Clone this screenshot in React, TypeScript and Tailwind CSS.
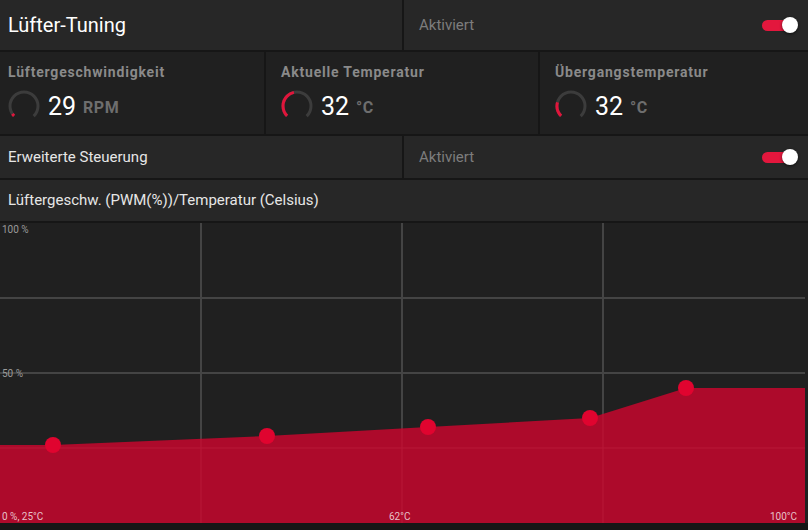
import React from "react";

const font = { fontFamily: "Roboto, 'Noto Sans', sans-serif" };

function Toggle() {
  return (
    <div className="relative w-[36px] h-[16px] mr-[10px]">
      <div className="absolute left-0 top-[3px] w-[28px] h-[11px] rounded-full bg-[#e3173d]" />
      <div className="absolute right-0 top-0 w-[16px] h-[16px] rounded-full bg-white shadow-[0_1px_3px_rgba(0,0,0,0.6)]" />
    </div>
  );
}

function Gauge({ frac }: { frac: number }) {
  // arc from bottom-left clockwise through top to bottom-right: 270deg sweep
  const r = 14;
  const c = 2 * Math.PI * r;
  const sweep = c * 0.75;
  return (
    <svg width="34" height="34" viewBox="0 0 34 34" className="shrink-0">
      <g transform="rotate(135 17 17)">
        <circle cx="17" cy="17" r={r} fill="none" stroke="#3c3c3c" strokeWidth="3" strokeDasharray={`${sweep} ${c}`} />
        <circle cx="17" cy="17" r={r} fill="none" stroke="#e0153b" strokeWidth="3" strokeDasharray={`${sweep * frac} ${c}`} />
      </g>
    </svg>
  );
}

function Stat({ label, value, unit, frac, pad }: { label: string; value: string; unit: string; frac: number; pad: string }) {
  return (
    <div className={`bg-[#202020] pt-[10px] flex flex-col ${pad}`}>
      <div className="text-[14px] font-bold text-[#8a8a8a] tracking-[0.8px] pl-[1px]">{label}</div>
      <div className="flex items-center mt-[6px] gap-[7px]">
        <Gauge frac={frac} />
        <span className="text-[25px] text-white leading-none">{value}</span>
        <span className="text-[16px] font-bold text-[#6e6e6e] mt-[3px] tracking-[0.5px]">{unit}</span>
      </div>
    </div>
  );
}

function ToggleRow({ title, h, big }: { title: string; h: string; big?: boolean }) {
  return (
    <div className={`flex gap-[2px] ${h}`}>
      <div className="w-[402px] bg-[#272727] flex items-center pl-[8px]">
        <span className={big ? "text-[20px] text-white" : "text-[15px] text-[#e6e6e6]"}>{title}</span>
      </div>
      <div className="flex-1 bg-[#272727] flex items-center justify-between pl-[15px]">
        <span className="text-[15px] text-[#7d7d7d]">Aktiviert</span>
        <Toggle />
      </div>
    </div>
  );
}

function Chart() {
  const pts = [
    [53, 222],
    [267, 213],
    [428, 204],
    [590, 195],
    [686, 165],
  ];
  const poly = `0,222 ${pts.map((p) => p.join(",")).join(" ")} 805,165 805,300 0,300`;
  return (
    <div className="h-[300px] bg-[#202020]">
      <svg width="808" height="300" viewBox="0 0 808 300" style={font}>
        <defs>
          <clipPath id="fill">
            <polygon points={poly} />
          </clipPath>
        </defs>
        {[75, 150, 225].map((y) => (
          <line key={y} x1="0" x2="805" y1={y} y2={y} stroke="#444" strokeWidth="2" />
        ))}
        {[201, 402, 603].map((x) => (
          <line key={x} x1={x} x2={x} y1="0" y2="300" stroke="#444" strokeWidth="2" />
        ))}
        <polygon points={poly} fill="#ad0a2b" />
        <g clipPath="url(#fill)">
          <line x1="0" x2="805" y1="225" y2="225" stroke="#b81838" strokeWidth="1" />
          {[201, 402, 603].map((x) => (
            <line key={x} x1={x} x2={x} y1="0" y2="300" stroke="#b81838" strokeWidth="1" />
          ))}
        </g>
        {pts.map(([x, y]) => (
          <circle key={x} cx={x} cy={y} r="8" fill="#e0042f" />
        ))}
        <text x="2" y="10" fontSize="10" fill="#9a9a9a">100 %</text>
        <text x="2" y="154" fontSize="10" fill="#9a9a9a">50 %</text>
        <text x="2" y="297" fontSize="10" fill="#e8c0c8">0 %, 25°C</text>
        <text x="389" y="297" fontSize="10" fill="#e8c0c8">62°C</text>
        <text x="770" y="297" fontSize="10" fill="#e8c0c8">100°C</text>
      </svg>
    </div>
  );
}

export default function App() {
  return (
    <div className="w-[808px] h-[530px] bg-[#161616] flex flex-col gap-[2px] overflow-hidden" style={font}>
      <ToggleRow title="Lüfter-Tuning" h="h-[50px]" big />
      <div className="h-[82px] grid grid-cols-[264px_272px_1fr] gap-[2px]">
        <Stat label="Lüftergeschwindigkeit" value="29" unit="RPM" frac={0.04} pad="pl-[7px]" />
        <Stat label="Aktuelle Temperatur" value="32" unit="°C" frac={0.45} pad="pl-[14px]" />
        <Stat label="Übergangstemperatur" value="32" unit="°C" frac={0.22} pad="pl-[14px]" />
      </div>
      <ToggleRow title="Erweiterte Steuerung" h="h-[42px]" />
      <div className="h-[41px] bg-[#272727] flex items-center pl-[8px]">
        <span className="text-[15px] text-[#e6e6e6]">Lüftergeschw. (PWM(%))/Temperatur (Celsius)</span>
      </div>
      <Chart />
    </div>
  );
}
